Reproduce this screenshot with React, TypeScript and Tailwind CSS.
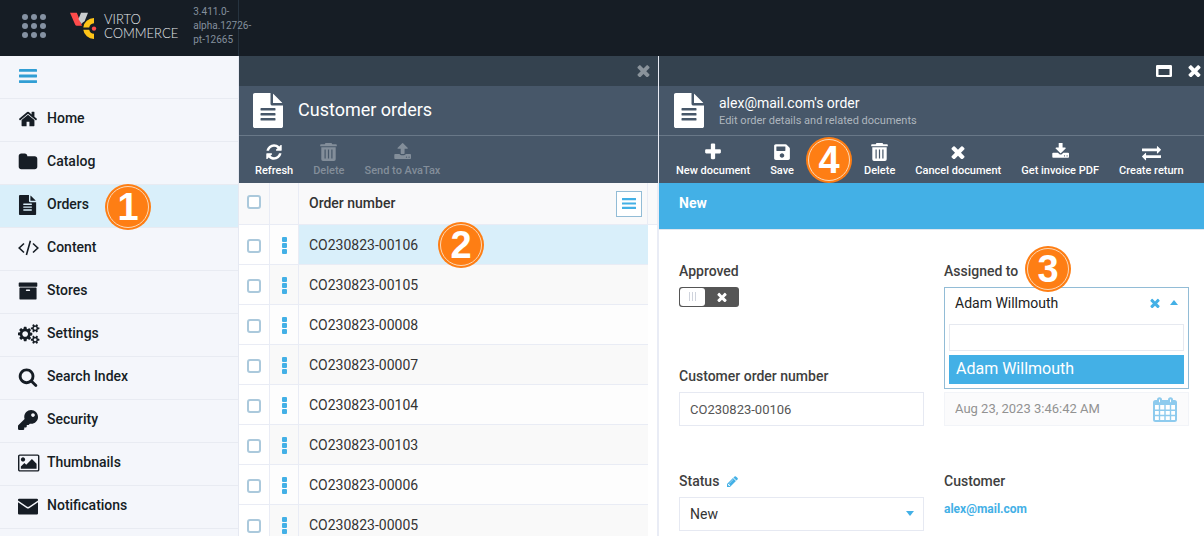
import React from "react";
import { FaKey, FaSave } from "react-icons/fa";

const paths = {
  home: "M1472 992v480q0 26-19 45t-45 19h-384v-384h-256v384h-384q-26 0-45-19t-19-45v-480q0-1 .5-3t.5-3l575-474 575 474q1 2 1 6zm223-69l-62 74q-8 9-21 11h-3q-13 0-21-7l-692-577-692 577q-12 8-24 7-13-2-21-11l-62-74q-8-10-7-23.5t11-21.5l719-599q32-26 76-26t76 26l244 204v-195q0-14 9-23t23-9h192q14 0 23 9t9 23v408l219 182q10 8 11 21.5t-7 23.5z",
  folder: "M1728 608v704q0 92-66 158t-158 66h-1216q-92 0-158-66t-66-158v-960q0-92 66-158t158-66h320q92 0 158 66t66 158v32h672q92 0 158 66t66 158z",
  file: "M1596 476q14 14 28 36h-472v-472q22 14 36 28zm-476 164h544v1056q0 40-28 68t-68 28h-1344q-40 0-68-28t-28-68v-1600q0-40 28-68t68-28h800v544q0 40 28 68t68 28zm160 736v-64q0-14-9-23t-23-9h-704q-14 0-23 9t-9 23v64q0 14 9 23t23 9h704q14 0 23-9t9-23zm0-256v-64q0-14-9-23t-23-9h-704q-14 0-23 9t-9 23v64q0 14 9 23t23 9h704q14 0 23-9t9-23zm0-256v-64q0-14-9-23t-23-9h-704q-14 0-23 9t-9 23v64q0 14 9 23t23 9h704q14 0 23-9t9-23z",
  archive: "M1088 832q0-26-19-45t-45-19h-256q-26 0-45 19t-19 45 19 45 45 19h256q26 0 45-19t19-45zm576-192v960q0 26-19 45t-45 19h-1408q-26 0-45-19t-19-45v-960q0-26 19-45t45-19h1408q26 0 45 19t19 45zm64-448v256q0 26-19 45t-45 19h-1536q-26 0-45-19t-19-45v-256q0-26 19-45t45-19h1536q26 0 45 19t19 45z",
  cogs: "M896 896q0-106-75-181t-181-75-181 75-75 181 75 181 181 75 181-75 75-181zm768 512q0-52-38-90t-90-38-90 38-38 90q0 53 37.5 90.5t90.5 37.5 90.5-37.5 37.5-90.5zm0-1024q0-52-38-90t-90-38-90 38-38 90q0 53 37.5 90.5t90.5 37.5 90.5-37.5 37.5-90.5zm-384 421v185q0 10-7 19.5t-16 10.5l-155 24q-11 35-32 76 34 48 90 115 7 11 7 20 0 12-7 19-23 30-82.5 89.5t-78.5 59.5q-11 0-21-7l-115-90q-37 19-77 31-11 108-23 155-7 24-30 24h-186q-11 0-20-7.5t-10-17.5l-23-153q-34-10-75-31l-118 89q-7 7-20 7-11 0-21-8-144-133-144-160 0-9 7-19 10-14 41-53t47-61q-23-44-35-82l-152-24q-10-1-17-9.5t-7-19.5v-185q0-10 7-19.5t16-10.5l155-24q11-35 32-76-34-48-90-115-7-11-7-20 0-12 7-20 22-30 82-89t79-59q11 0 21 7l115 90q34-18 77-32 11-108 23-154 7-24 30-24h186q11 0 20 7.5t10 17.5l23 153q34 10 75 31l118-89q8-7 20-7 11 0 21 8 144 133 144 160 0 8-7 19-12 16-42 54t-45 60q23 48 34 82l152 23q10 2 17 10.5t7 19.5zm640 533v140q0 16-149 31-12 27-30 52 51 113 51 138 0 4-4 7-122 71-124 71-8 0-46-47t-52-68q-20 2-30 2t-30-2q-14 21-52 68t-46 47q-2 0-124-71-4-3-4-7 0-25 51-138-18-25-30-52-149-15-149-31v-140q0-16 149-31 13-29 30-52-51-113-51-138 0-4 4-7 4-2 35-20t59-34 30-16q8 0 46 46.5t52 67.5q20-2 30-2t30 2q51-71 92-112l6-2q4 0 124 70 4 3 4 7 0 25-51 138 17 23 30 52 149 15 149 31zm0-1024v140q0 16-149 31-12 27-30 52 51 113 51 138 0 4-4 7-122 71-124 71-8 0-46-47t-52-68q-20 2-30 2t-30-2q-14 21-52 68t-46 47q-2 0-124-71-4-3-4-7 0-25 51-138-18-25-30-52-149-15-149-31v-140q0-16 149-31 13-29 30-52-51-113-51-138 0-4 4-7 4-2 35-20t59-34 30-16q8 0 46 46.5t52 67.5q20-2 30-2t30 2q51-71 92-112l6-2q4 0 124 70 4 3 4 7 0 25-51 138 17 23 30 52 149 15 149 31z",
  search: "M1216 832q0-185-131.5-316.5t-316.5-131.5-316.5 131.5-131.5 316.5 131.5 316.5 316.5 131.5 316.5-131.5 131.5-316.5zm512 832q0 52-38 90t-90 38q-54 0-90-38l-343-342q-179 124-399 124-143 0-273.5-55.5t-225-150-150-225-55.5-273.5 55.5-273.5 150-225 225-150 273.5-55.5 273.5 55.5 225 150 150 225 55.5 273.5q0 220-124 399l343 343q37 37 37 90z",
  picture: "M576 576q0 80-56 136t-136 56-136-56-56-136 56-136 136-56 136 56 56 136zm1024 384v448h-1408v-192l320-320 160 160 512-512zm96-704h-1600q-13 0-22.5 9.5t-9.5 22.5v1216q0 13 9.5 22.5t22.5 9.5h1600q13 0 22.5-9.5t9.5-22.5v-1216q0-13-9.5-22.5t-22.5-9.5zm160 32v1216q0 66-47 113t-113 47h-1600q-66 0-113-47t-47-113v-1216q0-66 47-113t113-47h1600q66 0 113 47t47 113z",
  envelope: "M1792 560v1000q0 104-104 104h-1584q-104 0-104-104v-1000l760 510q136 90 272 0zM1792 400l-790 540q-106 70-212 0l-790-540v-70q0-90 104-90h1584q104 0 104 90z",
  refresh: "M1639 1056q0 5-1 7-64 268-268 434.5t-478 166.5q-146 0-282.5-55t-243.5-157l-129 129q-19 19-45 19t-45-19-19-45v-448q0-26 19-45t45-19h448q26 0 45 19t19 45-19 45l-137 137q71 66 161 102t187 36q134 0 250-65t186-179q11-17 53-117 8-23 30-23h192q13 0 22.5 9.5t9.5 22.5zm25-800v448q0 26-19 45t-45 19h-448q-26 0-45-19t-19-45 19-45l138-138q-148-137-349-137-134 0-250 65t-186 179q-11 17-53 117-8 23-30 23h-199q-13 0-22.5-9.5t-9.5-22.5v-7q65-268 270-434.5t480-166.5q146 0 284 55.5t245 156.5l130-129q19-19 45-19t45 19 19 45z",
  times: "M1490 1322q0 40-28 68l-136 136q-28 28-68 28t-68-28l-294-294-294 294q-28 28-68 28t-68-28l-136-136q-28-28-28-68t28-68l294-294-294-294q-28-28-28-68t28-68l136-136q28-28 68-28t68 28l294 294 294-294q28-28 68-28t68 28l136 136q28 28 28 68t-28 68l-294 294 294 294q28 28 28 68z",
  download: "M1344 1344q0-26-19-45t-45-19-45 19-19 45 19 45 45 19 45-19 19-45zm256 0q0-26-19-45t-45-19-45 19-19 45 19 45 45 19 45-19 19-45zm128-224v320q0 40-28 68t-68 28h-1472q-40 0-68-28t-28-68v-320q0-40 28-68t68-28h465l135 136q58 56 136 56t136-56l136-136h464q40 0 68 28t28 68zm-325-569q17 41-14 70l-448 448q-18 19-45 19t-45-19l-448-448q-31-29-14-70 17-39 59-39h256v-448q0-26 19-45t45-19h256q26 0 45 19t19 45v448h256q42 0 59 39z",
  upload: "M1344 1472q0-26-19-45t-45-19-45 19-19 45 19 45 45 19 45-19 19-45zm256 0q0-26-19-45t-45-19-45 19-19 45 19 45 45 19 45-19 19-45zm128-224v320q0 40-28 68t-68 28h-1472q-40 0-68-28t-28-68v-320q0-40 28-68t68-28h427q21 56 70.5 92t110.5 36h256q61 0 110.5-36t70.5-92h427q40 0 68 28t28 68zm-325-648q-17 40-59 40h-256v448q0 26-19 45t-45 19h-256q-26 0-45-19t-19-45v-448h-256q-42 0-59-40-17-39 14-69l448-448q18-19 45-19t45 19l448 448q31 30 14 69z",
  exchange: "M1792 1184v192q0 13-9.5 22.5t-22.5 9.5h-1376v192q0 13-9.5 22.5t-22.5 9.5q-12 0-24-10l-319-320q-9-9-9-22 0-14 9-23l320-320q9-9 23-9 13 0 22.5 9.5t9.5 22.5v192h1376q13 0 22.5 9.5t9.5 22.5zm0-544q0 14-9 23l-320 320q-9 9-23 9-13 0-22.5-9.5t-9.5-22.5v-192h-1376q-13 0-22.5-9.5t-9.5-22.5v-192q0-13 9.5-22.5t22.5-9.5h1376v-192q0-14 9-23t23-9q12 0 24 10l319 319q9 9 9 23z",
  plus: "M1600 736v192q0 40-28 68t-68 28h-416v416q0 40-28 68t-68 28h-192q-40 0-68-28t-28-68v-416h-416q-40 0-68-28t-28-68v-192q0-40 28-68t68-28h416v-416q0-40 28-68t68-28h192q40 0 68 28t28 68v416h416q40 0 68 28t28 68z",
  pencil: "M491 1536l91-91-235-235-91 91v107h128v128h107zm523-928q0-22-22-22-10 0-17 7l-542 542q-7 7-7 17 0 22 22 22 10 0 17-7l542-542q7-7 7-17zm-54-192l416 416-832 832h-416v-416zm683 96q0 53-37 90l-166 166-416-416 166-165q36-38 90-38 53 0 91 38l235 234q37 39 37 91z",
};

function Glyph({ d, box, className }: { d: string; box: string; className: string }) {
  return (
    <svg viewBox={box} preserveAspectRatio="xMinYMid meet" fill="currentColor" className={className} aria-hidden="true">
      <path fillRule="evenodd" d={d} />
    </svg>
  );
}

function CodeIcon() {
  return (
    <svg viewBox="0 0 22 20" fill="none" stroke="currentColor" strokeWidth="1.6" className="h-5 w-[22px]" aria-hidden="true">
      <path d="M6 5.500 1.200 10 6 14.500M15 5.500 19.800 10 15 14.500M12.400 2.700 8.400 17" />
    </svg>
  );
}

function TrashIcon() {
  return (
    <svg viewBox="0 0 17 18" fill="currentColor" className="h-[18px] w-[17px]" aria-hidden="true">
      <path
        fillRule="evenodd"
        d="M5.500 0h6l.8 1.300H16q.8 0 .8.800V3.300H.2V2.100q0-.8.800-.8h3.700zM1.300 4.300h14.400V16.300q0 1.700-1.700 1.700H3q-1.700 0-1.700-1.700zM4.500 6.500v9h1.200v-9zM7.900 6.500v9h1.200v-9zM11.300 6.500v9h1.200v-9z"
      />
    </svg>
  );
}

function BarsIcon({ className }: { className: string }) {
  return (
    <svg viewBox="0 0 18 14" preserveAspectRatio="none" fill="currentColor" className={className} aria-hidden="true">
      <rect width="18" height="2.800" rx=".4" />
      <rect y="5.600" width="18" height="2.800" rx=".4" />
      <rect y="11.200" width="18" height="2.800" rx=".4" />
    </svg>
  );
}

function CalendarIcon() {
  return (
    <svg viewBox="0 0 24 25" className="h-[25px] w-6 text-[#8ecbee]" aria-hidden="true">
      <rect x="1" y="4" width="22" height="20" rx="1.500" fill="#fff" stroke="currentColor" strokeWidth="2" />
      <path d="M1 4h22v4H1z" fill="currentColor" />
      <path d="M6.500 8v16M12 8v16M17.500 8v16M1 13.200h22M1 18.500h22" stroke="currentColor" strokeWidth="1.400" />
      <rect x="5" y="1.200" width="3" height="5" rx="1.500" fill="#fff" stroke="currentColor" strokeWidth="2" />
      <rect x="16" y="1.200" width="3" height="5" rx="1.500" fill="#fff" stroke="currentColor" strokeWidth="2" />
    </svg>
  );
}

function WindowIcon() {
  return (
    <svg viewBox="0 0 16 12" className="h-3 w-4" aria-hidden="true">
      <path fill="currentColor" fillRule="evenodd" d="M1.300 0h13.400Q16 0 16 1.300v9.400q0 1.300-1.300 1.300H1.300Q0 12 0 10.700V1.300Q0 0 1.300 0zM2.500 4v6h11V4z" />
    </svg>
  );
}

function LogoMark() {
  return (
    <svg viewBox="0 0 27 28" className="h-7 w-[27px]" aria-hidden="true">
      <path d="M0 .8h6.800l5.200 13H6.800q-1.200 0-1.700-1.200z" fill="#ff4b4b" />
      <path d="M11 .8h7L14.600 9.200Q12.500 10.400 11.500 12L8.500 7z" fill="#c9ccce" />
      <path d="M24 6v5.200a5.300 5.300 0 0 0-4.800 4.300h-5.900A10.700 10.500 0 0 1 24 6z" fill="#fec418" />
      <path d="M24 27v-5.200a5.300 5.300 0 0 1-4.800-4.100h-5.900A10.700 10.500 0 0 0 24 27z" fill="#fec418" />
      <circle cx="24" cy="16.600" r="2.200" fill="#ff4b4b" />
    </svg>
  );
}

function StepBadge({ n }: { n: number }) {
  return (
    <span className="flex size-[46px] shrink-0 items-center justify-center rounded-full bg-[#fe7e14] p-[2px]">
      <span className="flex size-full items-center justify-center rounded-full border border-[#fbd9b8] font-['Liberation_Sans',sans-serif] text-[38px] leading-none font-bold text-white">
        {n}
      </span>
    </span>
  );
}

const side = "h-5 w-[22px]";
const menu: { label: string; icon: React.ReactNode; step?: number }[] = [
  { label: "Home", icon: <Glyph d={paths.home} box="0 0 1664 1792" className={side} /> },
  { label: "Catalog", icon: <Glyph d={paths.folder} box="0 0 1664 1792" className={side} /> },
  { label: "Orders", icon: <Glyph d={paths.file} box="40 0 1580 1792" className={side} />, step: 1 },
  { label: "Content", icon: <CodeIcon /> },
  { label: "Stores", icon: <Glyph d={paths.archive} box="0 0 1792 1792" className={side} /> },
  { label: "Settings", icon: <Glyph d={paths.cogs} box="0 0 1920 1792" className={side} /> },
  { label: "Search Index", icon: <Glyph d={paths.search} box="0 0 1664 1792" className={side} /> },
  { label: "Security", icon: <FaKey className="size-5" /> },
  { label: "Thumbnails", icon: <Glyph d={paths.picture} box="-64 0 1920 1792" className={side} /> },
  { label: "Notifications", icon: <Glyph d={paths.envelope} box="0 0 1792 1792" className={side} /> },
];

const orders = ["00106", "00105", "00008", "00007", "00104", "00103", "00006", "00005"];

function ToolButton({ label, icon, disabled }: { label: string; icon: React.ReactNode; disabled?: boolean }) {
  return (
    <button
      type="button"
      disabled={disabled}
      className="flex shrink-0 flex-col items-center gap-[2px] text-[11px] leading-4 font-medium whitespace-nowrap text-white disabled:text-[#838e9a]"
    >
      <span className="flex h-[18px] items-center">{icon}</span>
      {label}
    </button>
  );
}

const tool = "size-[18px]";
const box = "size-[14px] appearance-none rounded-[3px] border-2 border-[#abc9dc] bg-white align-middle";
const label = "flex h-5 items-center text-[14px] leading-5 font-medium text-[#3f3f3f]";

export default function App() {
  return (
    <div className="flex h-screen flex-col overflow-hidden bg-white font-[Roboto,sans-serif] text-[#333]">
      <header className="flex h-14 shrink-0 bg-[#161d25]">
        <div className="flex w-[239px] shrink-0 items-center border-r border-[#26333f] pb-1 pl-[22px]">
          <button type="button" aria-label="Apps" className="grid grid-cols-3 gap-[3px]">
            {Array.from({ length: 9 }, (_, i) => (
              <span key={i} className="size-[6px] rounded-full bg-[#8592a3]" />
            ))}
          </button>
          <a href="#" className="ml-6 flex items-center gap-[7px] text-[#e4e7ea]">
            <LogoMark />
            <span className="font-[Lato,sans-serif] text-[13px] leading-[14px] font-light">
              VIRTO
              <br />
              COMMERCE
            </span>
          </a>
          <span className="ml-[15px] w-9 text-[10px] leading-[14px] whitespace-nowrap text-[#84909d]">
            3.411.0-
            <br />
            alpha.12726-
            <br />
            pt-12665
          </span>
        </div>
      </header>

      <div className="flex min-h-0 flex-1">
        <nav className="w-[239px] shrink-0 overflow-hidden border-r border-[#e6e9f2] bg-[#f4f6fb]">
          <button type="button" aria-label="Menu" className="flex h-[43px] w-full items-center border-b border-[#e8ebf2] pb-[2px] pl-[19px] text-[#319ed4]">
            <BarsIcon className="h-[14px] w-[18px]" />
          </button>
          <ul>
            {menu.map((m) => (
              <li key={m.label} className={m.step ? "relative bg-[#d9effa]" : "relative"}>
                <a href="#" className="flex h-[43px] items-center border-b border-[#e8ebf2] pb-1 pl-[18px] text-[#161d25]">
                  <span className="flex w-[29px] pt-[2px]">{m.icon}</span>
                  <span className="text-[14px] leading-5 font-medium">{m.label}</span>
                </a>
                {m.step && (
                  <div className="absolute top-[-1px] left-[105px]">
                    <StepBadge n={m.step} />
                  </div>
                )}
              </li>
            ))}
          </ul>
        </nav>

        <section className="flex w-[420px] shrink-0 flex-col overflow-hidden border-r border-[#e9ecf5]">
          <div className="flex h-[30px] shrink-0 items-center justify-end bg-[#34424f] pr-2 pb-[2px] text-[#8a939b]">
            <button type="button" aria-label="Close list">
              <Glyph d={paths.times} box="256 256 1280 1280" className="size-[13px]" />
            </button>
          </div>
          <div className="flex h-[50px] shrink-0 items-center gap-[15px] border-b border-[#697888] bg-[#475769] pl-[14px] text-white">
            <Glyph d={paths.file} box="128 0 1536 1792" className="h-[35px] w-[30px]" />
            <h1 className="pb-[2px] text-[18px] leading-6">Customer orders</h1>
          </div>
          <div className="flex h-[47px] shrink-0 items-start gap-5 bg-[#475769] pt-[7px] pl-4">
            <ToolButton label="Refresh" icon={<Glyph d={paths.refresh} box="0 0 1792 1792" className={tool} />} />
            <ToolButton label="Delete" disabled icon={<TrashIcon />} />
            <ToolButton label="Send to AvaTax" disabled icon={<Glyph d={paths.upload} box="-64 64 1792 1792" className={tool} />} />
          </div>
          <div className="min-h-0 flex-1 overflow-hidden border-r border-[#e9ecf5]">
            <table className="w-full table-fixed border-separate border-spacing-0 text-left text-[14px]">
              <colgroup>
                <col className="w-[31px]" />
                <col className="w-[29px]" />
                <col />
                <col className="w-[9px]" />
              </colgroup>
              <thead>
                <tr className="h-[42px] bg-[#f9f9fa] [&>th]:border-b [&>th]:border-[#e9ecf5]">
                  <th className="border-r p-0 pb-[5px] text-center leading-none">
                    <input type="checkbox" aria-label="Select all" className={box} />
                  </th>
                  <th className="border-r p-0" />
                  <th className="border-r py-0 pr-[5px] pl-[10px] font-medium">
                    <span className="flex items-center justify-between">
                      Order number
                      <button type="button" aria-label="Columns" className="flex size-[26px] items-center justify-center border border-[#92bcd6] bg-white text-[#43b0e6]">
                        <BarsIcon className="h-[11px] w-[14px]" />
                      </button>
                    </span>
                  </th>
                  <th className="p-0" />
                </tr>
              </thead>
              <tbody>
                {orders.map((o, i) => (
                  <tr key={o} className="group h-10 [&>td]:border-[#e9ecf5]">
                    <td className="border-r border-b bg-white p-0 pt-px text-center leading-none">
                      <input type="checkbox" aria-label={"CO230823-" + o} className={box} />
                    </td>
                    <td className="border-r border-b bg-[#fdfdfd] p-0 group-even:bg-[#f9f9f9]">
                      <button type="button" aria-label="Row actions" className="mx-auto flex w-[5px] flex-col gap-px pt-[2px]">
                        <span className="size-[5px] rounded-[1px] bg-[#43b0e6]" />
                        <span className="size-[5px] rounded-[1px] bg-[#43b0e6]" />
                        <span className="size-[5px] rounded-[1px] bg-[#43b0e6]" />
                      </button>
                    </td>
                    <td className={i === 0 ? "border-b bg-[#d9effa] py-0 pl-[10px]" : "border-b bg-[#fdfdfd] py-0 pl-[10px] group-even:bg-[#f9f9f9]"}>
                      <span className="relative block leading-5">
                        CO230823-{o}
                        {i === 0 && (
                          <span className="absolute top-[-13px] left-[129px]">
                            <StepBadge n={2} />
                          </span>
                        )}
                      </span>
                    </td>
                    <td className="p-0" />
                  </tr>
                ))}
              </tbody>
            </table>
          </div>
        </section>

        <section className="flex min-w-0 flex-1 flex-col overflow-hidden">
          <div className="flex h-[30px] shrink-0 items-center justify-end gap-4 bg-[#34424f] pr-[3px] pb-px text-white">
            <button type="button" aria-label="Maximize">
              <WindowIcon />
            </button>
            <button type="button" aria-label="Close">
              <Glyph d={paths.times} box="256 256 1280 1280" className="size-[13px]" />
            </button>
          </div>
          <div className="flex h-[50px] shrink-0 items-center gap-[15px] border-b border-[#697888] bg-[#475769] pl-[15px] text-white">
            <Glyph d={paths.file} box="128 0 1536 1792" className="h-[35px] w-[30px]" />
            <div>
              <h2 className="text-[14px] leading-5">alex@mail.com's order</h2>
              <p className="text-[11px] leading-4 text-[#aeb6be]">Edit order details and related documents</p>
            </div>
          </div>
          <div className="flex h-[47px] shrink-0 items-start gap-5 bg-[#475769] pt-[7px] pl-[17px]">
            <ToolButton label="New document" icon={<Glyph d={paths.plus} box="0 0 1792 1792" className="size-5" />} />
            <ToolButton label="Save" icon={<FaSave className="size-[18px]" />} />
            <div className="-mt-[6px] flex w-[30px] shrink-0 justify-center">
              <StepBadge n={4} />
            </div>
            <ToolButton label="Delete" icon={<TrashIcon />} />
            <ToolButton label="Cancel document" icon={<Glyph d={paths.times} box="256 256 1280 1280" className="size-[14px]" />} />
            <ToolButton label="Get invoice PDF" icon={<Glyph d={paths.download} box="-64 64 1792 1792" className={tool} />} />
            <ToolButton label="Create return" icon={<Glyph d={paths.exchange} box="0 0 1792 1792" className="size-[19px]" />} />
          </div>
          <div className="h-[47px] shrink-0 border-b border-[#dfe6ee] bg-[#43b0e6] pt-[10px] pl-5 text-[14px] leading-5 font-bold text-white">New</div>

          <form className="grid grid-cols-2 gap-x-5 gap-y-[45px] pt-[31px] pr-[15px] pl-5">
            <div>
              <label htmlFor="approved" className={label}>Approved</label>
              <button id="approved" type="button" role="switch" aria-checked="false" className="mt-[6px] flex h-5 w-[60px] items-center rounded-[3px] bg-[#555] p-px text-white">
                <span className="flex h-full w-[25px] items-start justify-center gap-[2px] rounded-[3px] bg-white pt-1">
                  <span className="h-[9px] w-px bg-[#cfd3dc]" />
                  <span className="h-[9px] w-px bg-[#cfd3dc]" />
                  <span className="h-[9px] w-px bg-[#cfd3dc]" />
                </span>
                <span className="flex flex-1 justify-center">
                  <Glyph d={paths.times} box="256 256 1280 1280" className="size-[10px]" />
                </span>
              </button>
            </div>

            <div>
              <div className="relative w-fit">
                <label htmlFor="assigned" className={label}>Assigned to</label>
                <span className="absolute top-[-15px] left-[81px] z-20">
                  <StepBadge n={3} />
                </span>
              </div>
              <div className="relative mt-[6px] h-[34px]">
                <div className="absolute inset-x-0 top-0 z-10 border border-[#92bcd6] bg-white px-1 pb-1">
                  <div className="flex h-8 items-center pr-[6px] pb-[2px] pl-[6px] text-[#43b0e6]">
                    <button id="assigned" type="button" aria-expanded="true" className="flex-1 text-left text-[14px] leading-5 text-[#222]">
                      Adam Willmouth
                    </button>
                    <button type="button" aria-label="Clear">
                      <Glyph d={paths.times} box="256 256 1280 1280" className="size-[10px]" />
                    </button>
                    <svg viewBox="0 0 8 5" fill="currentColor" className="mb-[2px] ml-[10px] h-[5px] w-2" aria-hidden="true">
                      <path d="M0 5 4 0l4 5z" />
                    </svg>
                  </div>
                  <input aria-label="Search users" className="mt-1 block h-[27px] w-full border border-[#e6e9f0] px-2 outline-none" />
                  <button type="button" className="mt-1 block h-[29px] w-full bg-[#43b0e6] pb-[2px] pl-[7px] text-left text-[16px] leading-6 text-white">
                    Adam Willmouth
                  </button>
                </div>
              </div>
            </div>

            <div>
              <label htmlFor="number" className={label}>Customer order number</label>
              <input id="number" defaultValue="CO230823-00106" className="mt-[6px] block h-[34px] w-full border border-[#e6e9f2] px-[10px] text-[13px] text-[#555] outline-none" />
            </div>
            <div className="flex h-[34px] items-center self-end border border-[#f2f4f8] bg-[#fbfbfc] pr-[11px] pl-[10px]">
              <input aria-label="Date" disabled defaultValue="Aug 23, 2023 3:46:42 AM" className="min-w-0 flex-1 text-[13px] text-[#929292]" />
              <CalendarIcon />
            </div>

            <div>
              <div className="flex items-center gap-2">
                <label htmlFor="status" className={label}>Status</label>
                <button type="button" aria-label="Edit statuses" className="text-[#43b0e6]">
                  <Glyph d={paths.pencil} box="128 128 1536 1536" className="size-[11px]" />
                </button>
              </div>
              <div className="relative mt-[6px]">
                <select id="status" className="block h-[34px] w-full appearance-none border border-[#e6e9f2] bg-white px-[10px] text-[14px] text-[#333]">
                  <option>New</option>
                </select>
                <svg viewBox="0 0 8 5" fill="#43b0e6" className="pointer-events-none absolute top-[14px] right-[10px] h-[5px] w-2" aria-hidden="true">
                  <path d="M0 0h8L4 5z" />
                </svg>
              </div>
            </div>
            <div>
              <div className={label}>Customer</div>
              <a href="#" className="mt-2 block text-[12px] leading-5 font-bold text-[#43b0e6]">alex@mail.com</a>
            </div>
          </form>
        </section>
      </div>
    </div>
  );
}
